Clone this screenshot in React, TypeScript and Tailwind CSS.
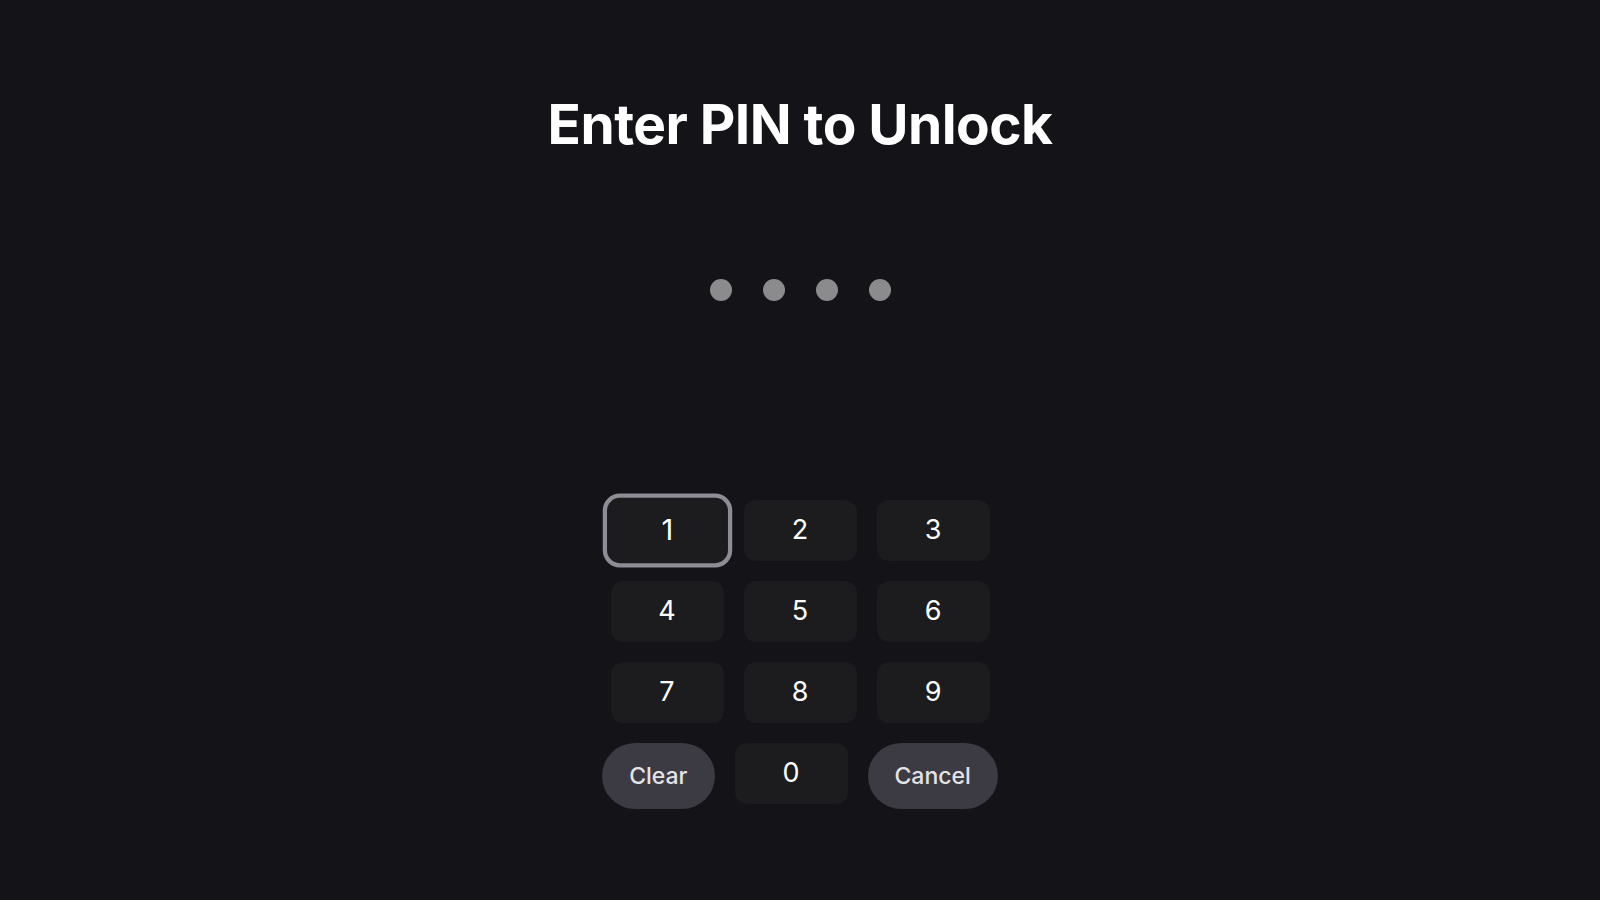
import React, { useState } from 'react';

const KEYS = ['1', '2', '3', '4', '5', '6', '7', '8', '9'];

const PinKey: React.FC<{ label: string; focused?: boolean; onPress: (v: string) => void }> = ({
  label,
  focused = false,
  onPress,
}) => (
  <button
    onClick={() => onPress(label)}
    className={`w-[113px] h-[61px] rounded-xl bg-[#1c1c1e] text-white text-[27px] flex items-center justify-center ${
      focused ? 'scale-[1.07] outline-4 outline-[#8e8c94] rounded-[13px]' : ''
    }`}
  >
    {label}
  </button>
);

export default function App() {
  const [pin, setPin] = useState('1234');

  const press = (v: string) => setPin((p) => (p.length < 4 ? p + v : p));

  return (
    <div
      className="w-full h-[900px] bg-[#131318] flex flex-col items-center text-white overflow-hidden"
      style={{ fontFamily: 'Inter, "Noto Sans", sans-serif' }}
    >
      {/* Title + dots */}
      <h1 className="mt-[97px] text-[55px] leading-none font-bold tracking-[-0.01em]">
        Enter PIN to Unlock
      </h1>
      <div className="mt-[127px] flex gap-[31px]">
        {[0, 1, 2, 3].map((i) => (
          <span
            key={i}
            className={`w-[22px] h-[22px] rounded-full ${i < pin.length ? 'bg-[#8b8b8d]' : 'bg-[#3a3a3e]'}`}
          />
        ))}
      </div>

      {/* Keypad */}
      <div className="mt-[199px] flex flex-col items-center gap-5">
        <div className="grid grid-cols-3 gap-5">
          {KEYS.map((k) => (
            <PinKey key={k} label={k} focused={k === '1'} onPress={press} />
          ))}
        </div>
        <div className="flex items-start gap-5">
          <button
            onClick={() => setPin('')}
            className="h-[66px] px-[27px] rounded-full bg-[#3c3a42] text-[#e4e4e6] text-[23px] font-medium"
          >
            Clear
          </button>
          <PinKey label="0" onPress={press} />
          <button className="h-[66px] px-[27px] rounded-full bg-[#3c3a42] text-[#e4e4e6] text-[23px] font-medium">
            Cancel
          </button>
        </div>
      </div>
    </div>
  );
}
